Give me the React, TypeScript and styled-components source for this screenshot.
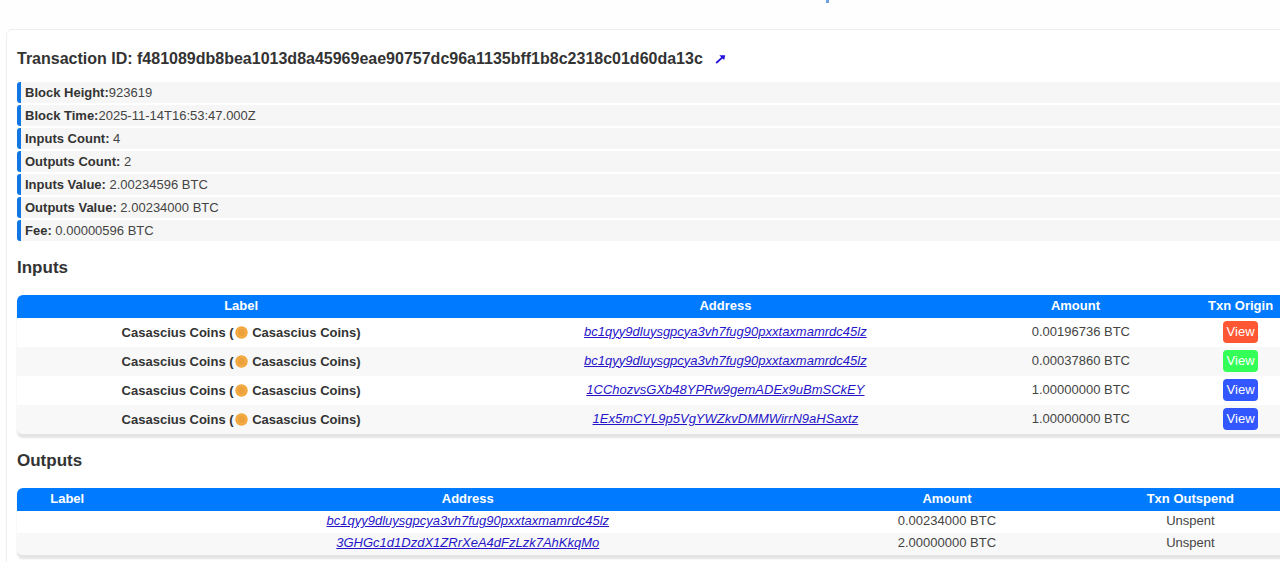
import React from "react";
import styled, { createGlobalStyle } from "styled-components";

const GlobalStyle = createGlobalStyle`
  *, *::before, *::after { box-sizing: border-box; }
  body {
    margin: 0;
    background: #fefefe;
    color: #444;
    font-family: "Liberation Sans", Arial, sans-serif;
    font-size: 13px;
    line-height: 21px;
  }
  h1, h2, strong { color: #333; }
`;

const Page = styled.div`
  overflow: hidden;
`;

const Banner = styled.header`
  display: flex;
  justify-content: center;
  height: 29px;
  padding-left: 374px;
`;

const BannerMark = styled.span`
  width: 3px;
  height: 3px;
  background: #6f9fe0;
`;

const Card = styled.main`
  margin: 0 -36px 0 6px;
  padding: 17px 10px 24px;
  border: 1px solid #eee;
  border-radius: 6px;
  background: #fff;
`;

const Title = styled.h1`
  margin: 0 0 11px;
  font-size: 16px;
  line-height: 24px;
`;

const TitleLink = styled.a`
  display: inline-block;
  margin-left: 12px;
  color: #2210d8;
`;

const Details = styled.ul`
  display: flex;
  flex-direction: column;
  gap: 2px;
  margin: 0;
  padding: 0;
  list-style: none;
`;

const Detail = styled.li`
  padding-left: 4px;
  border-left: 4px solid #1277e2;
  border-radius: 3px;
  background: #f6f6f6;
`;

const SectionTitle = styled.h2`
  margin: 15px 0;
  font-size: 17px;
  line-height: 24px;
`;

const Table = styled.table`
  width: 100%;
  table-layout: fixed;
  border-collapse: separate;
  border-spacing: 0;
  border-radius: 6px;
  overflow: hidden;
  box-shadow: 0 4px 2px #e4e4e4;
  line-height: 20px;
  text-align: center;
`;

const HeadCell = styled.th<{ $width: string }>`
  width: ${(p) => p.$width};
  height: 23px;
  padding: 0 0 2px;
  background: #007bff;
  color: #fff;
  white-space: pre;
`;

const Row = styled.tr<{ $tall?: boolean }>`
  height: ${(p) => (p.$tall ? 29 : 22)}px;
  background: #fff;
  &:nth-child(even) {
    background: #f8f8f8;
  }
`;

const Cell = styled.td`
  padding: 0 0 2px;
`;

const LabelCell = styled(Cell)`
  padding: 0;
  color: #333;
  font-weight: bold;
`;

const Coin = styled.svg`
  width: 13px;
  height: 13px;
  margin: 0 1px;
  vertical-align: -2px;
`;

const Address = styled.a`
  color: #2716c8;
  font-style: italic;
`;

const ViewButton = styled.button<{ $color: string }>`
  display: block;
  width: 35px;
  height: 22px;
  margin: 0 auto;
  padding: 0;
  border: 0;
  border-radius: 4px;
  background: ${(p) => p.$color};
  color: #fff;
  font: inherit;
`;

const details = [
  ["Block Height:", "923619"],
  ["Block Time:", "2025-11-14T16:53:47.000Z"],
  ["Inputs Count:", " 4"],
  ["Outputs Count:", " 2"],
  ["Inputs Value:", " 2.00234596 BTC"],
  ["Outputs Value:", " 2.00234000 BTC"],
  ["Fee:", " 0.00000596 BTC"],
];

const inputs = [
  { address: "bc1qyy9dluysgpcya3vh7fug90pxxtaxmamrdc45lz", amount: "0.00196736 BTC", color: "#ff5733" },
  { address: "bc1qyy9dluysgpcya3vh7fug90pxxtaxmamrdc45lz", amount: "0.00037860 BTC", color: "#33ff57" },
  { address: "1CChozvsGXb48YPRw9gemADEx9uBmSCkEY", amount: "1.00000000 BTC", color: "#3357ff" },
  { address: "1Ex5mCYL9p5VgYWZkvDMMWirrN9aHSaxtz", amount: "1.00000000 BTC", color: "#3357ff" },
];

const outputs = [
  { address: "bc1qyy9dluysgpcya3vh7fug90pxxtaxmamrdc45lz", amount: "0.00234000 BTC" },
  { address: "3GHGc1d1DzdX1ZRrXeA4dFzLzk7AhKkqMo", amount: "2.00000000 BTC" },
];

function CoinIcon() {
  return (
    <Coin viewBox="0 0 13 13" aria-hidden="true">
      <circle cx="6.5" cy="6.5" r="6.2" fill="#f3a638" />
      <circle cx="6.5" cy="6.5" r="4.3" fill="#eda13a" stroke="#f6b65c" strokeWidth="0.7" />
    </Coin>
  );
}

export default function App() {
  return (
    <>
      <GlobalStyle />
      <Page>
        <Banner>
          <BannerMark />
        </Banner>
        <Card>
          <Title>
            Transaction ID: f481089db8bea1013d8a45969eae90757dc96a1135bff1b8c2318c01d60da13c
            <TitleLink href="#transaction" aria-label="Open transaction">
              <svg width="11" height="10" viewBox="0 0 11 10" aria-hidden="true">
                <path d="M1.2 9 L7.4 3.4" stroke="currentColor" strokeWidth="1.8" fill="none" />
                <path d="M4.4 1.2 H10.2 L9.2 6 L7.8 4.8 L6 3 Z" fill="currentColor" />
              </svg>
            </TitleLink>
          </Title>
          <Details>
            {details.map(([name, value]) => (
              <Detail key={name}>
                <strong>{name}</strong>
                {value}
              </Detail>
            ))}
          </Details>

          <SectionTitle>Inputs</SectionTitle>
          <Table>
            <thead>
              <tr>
                <HeadCell $width="34.8%">Label</HeadCell>
                <HeadCell $width="40.4%">Address</HeadCell>
                <HeadCell $width="14.8%">{"Amount   "}</HeadCell>
                <HeadCell $width="10%">Txn Origin</HeadCell>
              </tr>
            </thead>
            <tbody>
              {inputs.map((row, i) => (
                <Row key={i} $tall>
                  <LabelCell>
                    Casascius Coins (<CoinIcon /> Casascius Coins)
                  </LabelCell>
                  <Cell>
                    <Address href={`#${row.address}`}>{row.address}</Address>
                  </Cell>
                  <Cell>{row.amount}</Cell>
                  <Cell>
                    <ViewButton type="button" $color={row.color}>View</ViewButton>
                  </Cell>
                </Row>
              ))}
            </tbody>
          </Table>

          <SectionTitle>Outputs</SectionTitle>
          <Table>
            <thead>
              <tr>
                <HeadCell $width="7.8%">Label</HeadCell>
                <HeadCell $width="54.4%">Address</HeadCell>
                <HeadCell $width="20%">Amount</HeadCell>
                <HeadCell $width="17.8%">Txn Outspend</HeadCell>
              </tr>
            </thead>
            <tbody>
              {outputs.map((row) => (
                <Row key={row.address}>
                  <LabelCell />
                  <Cell>
                    <Address href={`#${row.address}`}>{row.address}</Address>
                  </Cell>
                  <Cell>{row.amount}</Cell>
                  <Cell>Unspent</Cell>
                </Row>
              ))}
            </tbody>
          </Table>
        </Card>
      </Page>
    </>
  );
}
